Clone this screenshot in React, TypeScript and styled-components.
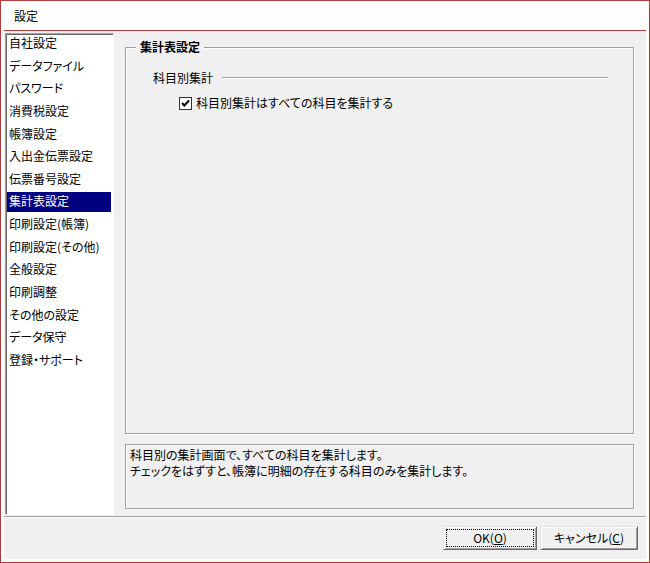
import React from "react";
import styled, { createGlobalStyle } from "styled-components";

const GlobalStyle = createGlobalStyle`
  html, body { margin: 0; padding: 0; background: #fff; }
  body {
    font-family: "Noto Sans CJK JP", "Noto Sans", sans-serif;
    font-size: 12px;
    color: #000;
    font-feature-settings: "palt" 1;
  }
  * { box-sizing: border-box; }
`;

const RED = "#b33b3b";

const Window = styled.div`
  width: 650px;
  height: 563px;
  border: 1px solid ${RED};
  background: #fff;
  padding: 0 3px 3px;
  display: flex;
  flex-direction: column;
`;

const TitleBar = styled.div`
  height: 29px;
  display: flex;
  align-items: center;
  padding-left: 10px;
  line-height: 1;
`;

const Client = styled.div`
  flex: 1;
  border-top: 1px solid ${RED};
  background: #f0f0f0;
  display: flex;
  flex-direction: column;
`;

const MainRow = styled.div`
  display: flex;
  align-items: flex-start;
  padding: 2px 12px 0 1px;
  gap: 11px;
`;

const NavList = styled.div`
  width: 109px;
  height: 482px;
  background: #fff;
  border-top: 1px solid #a0a0a0;
  border-left: 1px solid #a0a0a0;
  border-right: 1px solid #fff;
  border-bottom: 1px solid #fff;
  box-shadow: inset 1px 1px 0 #696969;
  padding: 0 2px 0 1px;
  display: flex;
  flex-direction: column;
  gap: 2.64px;
`;

const NavItem = styled.div<{ $selected?: boolean }>`
  height: 20px;
  line-height: 17px;
  padding-left: 2px;
  white-space: nowrap;
  background: ${(p) => (p.$selected ? "#000080" : "transparent")};
  color: ${(p) => (p.$selected ? "#fff" : "#000")};
`;

const RightCol = styled.div`
  width: 509px;
  padding-top: 14px;
  display: flex;
  flex-direction: column;
  gap: 10px;
`;

const GroupBox = styled.div`
  position: relative;
  height: 387px;
  border: 1px solid #a0a0a0;
  box-shadow: 1px 1px 0 #fff, inset 1px 1px 0 #fff;
  padding-top: 23px;
`;

const GroupTitle = styled.span`
  position: absolute;
  top: -8px;
  left: 10px;
  padding: 0 4px;
  background: #f0f0f0;
  font-weight: bold;
  line-height: 14px;
`;

const SubHeader = styled.div`
  display: flex;
  align-items: center;
  gap: 9px;
  margin: 0 25px 0 27px;
  line-height: 14px;
`;

const EtchedLine = styled.div`
  flex: 1;
  height: 2px;
  border-top: 1px solid #a0a0a0;
  border-bottom: 1px solid #fff;
`;

const CheckRow = styled.label`
  display: flex;
  align-items: center;
  gap: 4px;
  margin: 11px 0 0 53px;
  line-height: 14px;
`;

const CheckBox = styled.span`
  width: 13px;
  height: 13px;
  border: 1px solid #333;
  background: #fff;
  display: flex;
  align-items: center;
  justify-content: center;
`;

const DescBox = styled.div`
  height: 65px;
  border: 1px solid #a0a0a0;
  box-shadow: 1px 1px 0 #fff, inset 1px 1px 0 #fff;
  padding: 2px 4px;
  line-height: 16px;
`;

const Separator = styled.div`
  margin-top: 1px;
  height: 2px;
  border-top: 1px solid #a0a0a0;
  border-bottom: 1px solid #fff;
`;

const Footer = styled.div`
  display: flex;
  justify-content: flex-end;
  gap: 3px;
  padding: 8px 8px 0 0;
`;

const Button = styled.button<{ $width: number; $focused?: boolean }>`
  width: ${(p) => p.$width}px;
  height: 24px;
  font-family: inherit;
  font-size: 12px;
  font-feature-settings: "palt" 1;
  color: #000;
  background: #f0f0f0;
  border: 1px solid;
  border-color: #e3e3e3 #696969 #696969 #e3e3e3;
  box-shadow: inset 1px 1px 0 #fff, inset -1px -1px 0 #a0a0a0;
  padding: 0;
  line-height: 20px;
  outline: ${(p) => (p.$focused ? "1px dotted #000" : "none")};
  outline-offset: -4px;
`;

const items = [
  "自社設定",
  "データファイル",
  "パスワード",
  "消費税設定",
  "帳簿設定",
  "入出金伝票設定",
  "伝票番号設定",
  "集計表設定",
  "印刷設定(帳簿)",
  "印刷設定(その他)",
  "全般設定",
  "印刷調整",
  "その他の設定",
  "データ保守",
  "登録・サポート",
];

export default function App() {
  return (
    <>
      <GlobalStyle />
      <Window>
        <TitleBar>設定</TitleBar>
        <Client>
          <MainRow>
            <NavList>
              {items.map((it) => (
                <NavItem key={it} $selected={it === "集計表設定"}>
                  {it}
                </NavItem>
              ))}
            </NavList>
            <RightCol>
              <GroupBox>
                <GroupTitle>集計表設定</GroupTitle>
                <SubHeader>
                  <span>科目別集計</span>
                  <EtchedLine />
                </SubHeader>
                <CheckRow>
                  <CheckBox>
                    <svg width="11" height="11" viewBox="0 0 11 11">
                      <polyline
                        points="2,5 4.3,7.5 9,2.5"
                        fill="none"
                        stroke="#000"
                        strokeWidth="2"
                      />
                    </svg>
                  </CheckBox>
                  <span>科目別集計はすべての科目を集計する</span>
                </CheckRow>
              </GroupBox>
              <DescBox>
                科目別の集計画面で、すべての科目を集計します。
                <br />
                チェックをはずすと、帳簿に明細の存在する科目のみを集計します。
              </DescBox>
            </RightCol>
          </MainRow>
          <Separator />
          <Footer>
            <Button $width={94} $focused>
              OK(<u>O</u>)
            </Button>
            <Button $width={98}>
              キャンセル(<u>C</u>)
            </Button>
          </Footer>
        </Client>
      </Window>
    </>
  );
}
